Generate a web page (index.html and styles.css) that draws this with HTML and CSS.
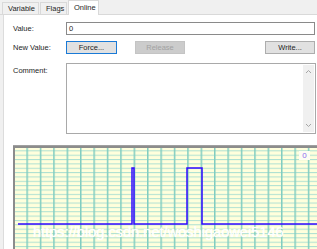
FILE: index.html
```html
<!DOCTYPE html>
<html>
<head>
<meta charset="utf-8">
<link rel="stylesheet" href="styles.css">
</head>
<body>
<div class="tabs">
  <div class="tab">Variable</div>
  <div class="tab">Flags</div>
  <div class="tab active">Online</div>
</div>
<div class="panel">
  <div class="row">
    <span class="lbl">Value:</span>
    <div class="input">0</div>
  </div>
  <div class="row btnrow">
    <span class="lbl">New Value:</span>
    <div class="btn focus">Force...</div>
    <div class="btn disabled">Release</div>
    <span class="spacer"></span>
    <div class="btn">Write...</div>
  </div>
  <div class="row comment">
    <span class="lbl top">Comment:</span>
    <div class="textarea">
      <div class="scroll">
        <svg class="arr" width="7" height="5" viewBox="0 0 7 5"><path d="M1 4 L3.5 1.5 L6 4" fill="none" stroke="#a6a6a6" stroke-width="1"/></svg>
        <svg class="arr" width="7" height="5" viewBox="0 0 7 5"><path d="M1 1 L3.5 3.5 L6 1" fill="none" stroke="#a6a6a6" stroke-width="1"/></svg>
      </div>
    </div>
  </div>
  <div class="sep"></div>
  <div class="graph">
    <svg class="plot" width="304" height="110" viewBox="0 0 304 110">
      <defs>
        <pattern id="grid" x="0" y="0" width="13.4" height="4.35" patternUnits="userSpaceOnUse">
          <rect width="13.4" height="4.35" fill="#ffffdc"/>
          <line x1="0" y1="0.5" x2="13.4" y2="0.5" stroke="#ade0d2" stroke-width="1"/>
          <line x1="0.75" y1="0" x2="0.75" y2="4.35" stroke="#80cdc1" stroke-width="1.5"/>
        </pattern>
      </defs>
      <rect x="0" y="0" width="304" height="110" fill="url(#grid)"/>
      <path d="M5 78 H119 V22 H121 V78 H174 V22 H189 V78 H304" fill="none" stroke="#3008ff" stroke-width="1.5"/>
    </svg>
    <span class="zero">0</span>
    <span class="wm">https://blog.csdn.net/woshigaowei5146</span>
  </div>
</div>
</body>
</html>
```
FILE: styles.css
```css
html, body {
  margin: 0;
  padding: 0;
}
body {
  width: 317px;
  height: 249px;
  overflow: hidden;
  background: #f0f0f0;
  font-family: "Liberation Sans", Arial, sans-serif;
  font-size: 7.5px;
  color: #1e1e1e;
}
.tabs {
  display: flex;
  align-items: flex-end;
  height: 14px;
  padding-left: 2px;
  border-bottom: 1px solid #d9d9d9;
}
.tab {
  height: 12px;
  line-height: 12px;
  padding: 0 5px;
  border: 1px solid #d9d9d9;
  border-bottom: none;
  box-sizing: border-box;
  background: #f0f0f0;
  margin-right: 1px;
}
.tab:first-child {
  width: 37px;
}
.tab:nth-child(2) {
  width: 27px;
}
.tab.active {
  height: 15px;
  line-height: 13px;
  width: 31px;
  background: #fff;
  margin-bottom: -1px;
  position: relative;
}
.panel {
  margin-left: 3px;
  border-left: 1px solid #dcdcdc;
  background: #fff;
  height: 240px;
  padding: 7px 0 0 9px;
  box-sizing: border-box;
}
.row {
  display: flex;
  align-items: center;
}
.lbl {
  width: 53px;
  flex: none;
}
.input {
  width: 249px;
  height: 13px;
  box-sizing: border-box;
  border: 1px solid #8a8a8a;
  line-height: 11px;
  padding-left: 2px;
}
.btnrow {
  margin-top: 6px;
  width: 302px;
}
.btn {
  width: 50px;
  height: 13px;
  box-sizing: border-box;
  border: 1px solid #adadad;
  background: #e1e1e1;
  text-align: center;
  line-height: 11px;
}
.btn.focus {
  width: 51px;
  border-color: #1a7ad6;
}
.btn.disabled {
  margin-left: 18px;
  background: #cccccc;
  border-color: #c4c4c4;
  color: #a2a2a2;
}
.spacer {
  flex: 1;
}
.comment {
  margin-top: 9px;
  align-items: flex-start;
}
.lbl.top {
  padding-top: 3px;
}
.textarea {
  width: 250px;
  height: 71px;
  box-sizing: border-box;
  border: 1px solid #a9a9a9;
  display: flex;
  justify-content: flex-end;
  padding: 1px;
}
.scroll {
  width: 11px;
  background: #f0f0f0;
  display: flex;
  flex-direction: column;
  justify-content: space-between;
  align-items: center;
  padding: 4px 0;
}
.arr {
  display: block;
}
.sep {
  margin-top: 11px;
  height: 1px;
  background: #a0a0a0;
}
.graph {
  position: relative;
  width: 304px;
  height: 110px;
  border-top: 2px solid #8c8c8c;
  border-left: 2px solid #8c8c8c;
  box-sizing: border-box;
  overflow: hidden;
}
.plot {
  display: block;
  margin: -2px 0 0 -2px;
}
.zero {
  position: absolute;
  left: 284px;
  top: 3px;
  width: 11px;
  height: 9px;
  background: #fdfdf3;
  color: #8c6cf0;
  font-size: 8px;
  line-height: 9px;
  text-align: center;
}
.wm {
  position: absolute;
  left: 18px;
  top: 76px;
  color: #ffffff;
  font-size: 14.6px;
  white-space: nowrap;
  text-shadow: 0 0 1px rgba(255, 255, 255, 0.8);
}
```
